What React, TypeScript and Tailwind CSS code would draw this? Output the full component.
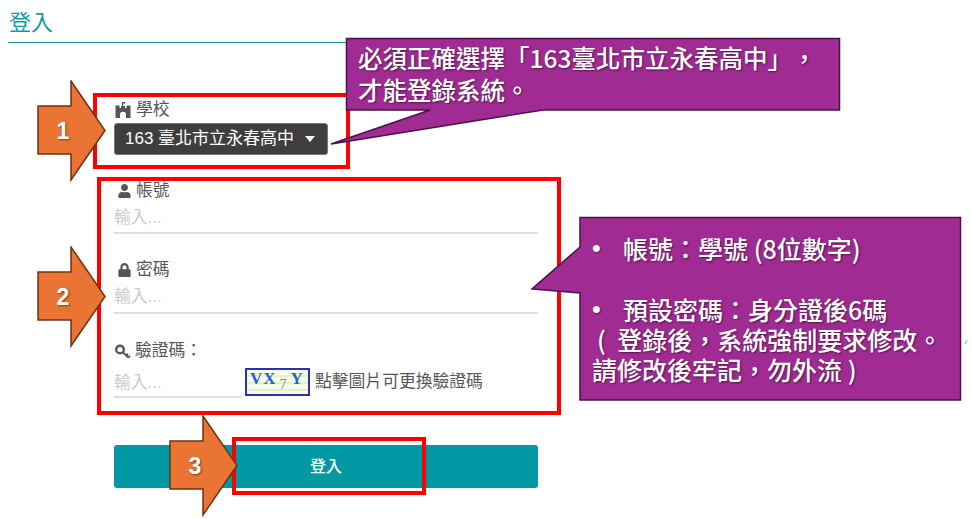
import { FaLock, FaUser } from "react-icons/fa";

const arrows = [
  { label: "1", top: "top-[80px]", left: "left-[37px]" },
  { label: "2", top: "top-[246px]", left: "left-[37px]" },
  { label: "3", top: "top-[415px]", left: "left-[169px]" },
];

function Arrow({ label, top, left }: { label: string; top: string; left: string }) {
  return (
    <div className={`absolute ${top} ${left} h-[102px] w-[70px]`}>
      <svg width="70" height="102" viewBox="0 0 70 102" className="absolute inset-0">
        <polygon points="1,26 34,26 34,1 68,50.5 34,100 34,74 1,74" fill="#ea7434" stroke="#6e3210" strokeWidth="1.5" />
      </svg>
      <div className="absolute left-0 top-[36px] w-[52px] text-center text-[23px] font-bold leading-[30px] text-white [font-family:'Liberation_Sans',sans-serif] [text-shadow:1px_1px_2px_rgba(0,0,0,0.45)]">
        {label}
      </div>
    </div>
  );
}

function Castle() {
  return (
    <svg width="18" height="16" viewBox="0 0 18 16" fill="#555">
      <path d="M8 0h3v1.6H9.2V4H11V6h1.5V3.5h4V16H12v-3.2a3 3 0 0 0-6 0V16H1.5V3.5h4V6H7V4h1z" />
    </svg>
  );
}

function KeyIcon() {
  return (
    <svg width="17" height="15" viewBox="0 0 17 15" fill="none" stroke="#555">
      <circle cx="6" cy="5.5" r="3.8" strokeWidth="2.4" />
      <path d="M9 8.5l5.5 5M12 11.5l2-1.8M14.2 13.5l1.8-1.6" strokeWidth="2" />
    </svg>
  );
}

function Bullet() {
  return <span className="w-[31px] [font-family:'Liberation_Sans',sans-serif]">•</span>;
}

function UnderlineInput({ className }: { className: string }) {
  return (
    <div className={`border-b-2 border-[#dedede] text-[16.8px] leading-[24px] text-[#cccccc] ${className}`}>輸入...</div>
  );
}

export default function App() {
  return (
    <div lang="zh-Hant" className="relative h-[519px] w-[971px] overflow-hidden bg-white text-[16.8px] text-[#555555] [font-family:'Liberation_Sans','Noto_Sans_CJK_TC',sans-serif] [text-spacing-trim:space-all]">
      <div className="ml-2 w-[345px] border-b border-[#1c97a0] pb-[4px] pl-px pt-[7px] text-[22px] leading-[31px] text-[#0f9aa5]">登入</div>

      <form className="ml-[114px] w-[424px]">
        <div className="mt-[55px] flex h-[24px] items-center gap-[4px] leading-[24px]">
          <Castle />
          <span>學校</span>
        </div>
        <div className="mt-[1px] flex h-[32px] w-[214px] items-center justify-between rounded-[3px] border border-[#777777] bg-[#3e3e3e] pl-[10px] pr-[12px] text-[17px] text-white">
          <span>163 臺北市立永春高中</span>
          <span className="h-0 w-0 border-x-[5px] border-t-[6px] border-x-transparent border-t-white" />
        </div>

        <div className="mt-[24px] flex h-[24px] items-center gap-[5px]">
          <FaUser className="ml-[4px] h-[14px] w-[13px] text-[#555555]" />
          <span>帳號</span>
        </div>
        <UnderlineInput className="mt-[2px] h-[29px] pt-[1px]" />

        <div className="mt-[24px] flex h-[24px] items-center gap-[5px]">
          <FaLock className="ml-[4px] h-[14px] w-[13px] text-[#555555]" />
          <span>密碼</span>
        </div>
        <UnderlineInput className="mt-[2px] h-[30px] pt-[1px]" />

        <div className="mt-[25px] flex h-[24px] items-center gap-[4px]">
          <KeyIcon />
          <span>驗證碼：</span>
        </div>
        <div className="flex items-start">
          <UnderlineInput className="mt-[3px] h-[32px] w-[127px] pt-[5px]" />
          <div className="relative ml-[4px] mt-[5px] h-[28px] w-[65px] overflow-hidden whitespace-nowrap border-2 border-[#2a30b8] bg-[repeating-linear-gradient(180deg,#f7fbe9_0px,#f7fbe9_5px,#cfe6a5_6px,#f7fbe9_7px)] pl-[3px] text-[17px] font-bold leading-[17px] tracking-[1px] text-[#1d62d6] [font-family:'Liberation_Serif',serif]">
            VX<span className="relative top-[5px] mx-[3px] text-[14px] font-normal text-[#6a8ac0]">7</span>Y
          </div>
          <span className="ml-[5px] mt-[7px] leading-[24px]">點擊圖片可更換驗證碼</span>
        </div>

        <button type="button" className="mt-[47px] h-[43px] w-full rounded-[3px] bg-[#0099a3] text-center text-[16px] font-medium text-white">
          登入
        </button>
      </form>

      <div className="absolute left-[93px] top-[93px] h-[76px] w-[257px] border-4 border-[#ff0000]" />
      <div className="absolute left-[97px] top-[177px] h-[238px] w-[464px] border-4 border-[#ff0000]" />
      <div className="absolute left-[232px] top-[437px] h-[58px] w-[194px] border-4 border-[#ff0000]" />

      {arrows.map((a) => (
        <Arrow key={a.label} {...a} />
      ))}

      <svg width="971" height="519" viewBox="0 0 971 519" className="pointer-events-none absolute inset-0">
        <polygon points="346.5,38.5 839.5,38.5 839.5,110 543,110 331,144 430,110 346.5,110" fill="#a02b93" stroke="#4a1248" strokeWidth="1.5" />
        <polygon points="580,217.5 960.5,217.5 960.5,400 580,400 580,293 532,289 580,247" fill="#a02b93" stroke="#4a1248" strokeWidth="1.5" />
        <path d="M967 340l-2 4" stroke="#999" strokeWidth="1" />
      </svg>

      <div className="absolute left-[358px] top-[42px] whitespace-nowrap text-[24.5px] font-medium leading-[32px] text-white [font-family:'Noto_Sans_CJK_TC',sans-serif] [text-shadow:1px_1px_2px_rgba(0,0,0,0.5)]">
        <p>必須正確選擇「163臺北市立永春高中」，</p>
        <p>才能登錄系統。</p>
      </div>

      <div className="absolute left-[592px] top-[233px] whitespace-nowrap text-[25px] font-medium leading-[30px] text-white [font-family:'Noto_Sans_CJK_TC',sans-serif] [text-shadow:1px_1px_2px_rgba(0,0,0,0.5)]">
        <p className="flex"><Bullet />帳號：學號 (8位數字)</p>
        <p className="h-[31px]" />
        <p className="flex"><Bullet />預設密碼：身分證後6碼</p>
        <p className="pl-[5px]">( &nbsp;登錄後，系統強制要求修改。</p>
        <p>請修改後牢記，勿外流 )</p>
      </div>
    </div>
  );
}
